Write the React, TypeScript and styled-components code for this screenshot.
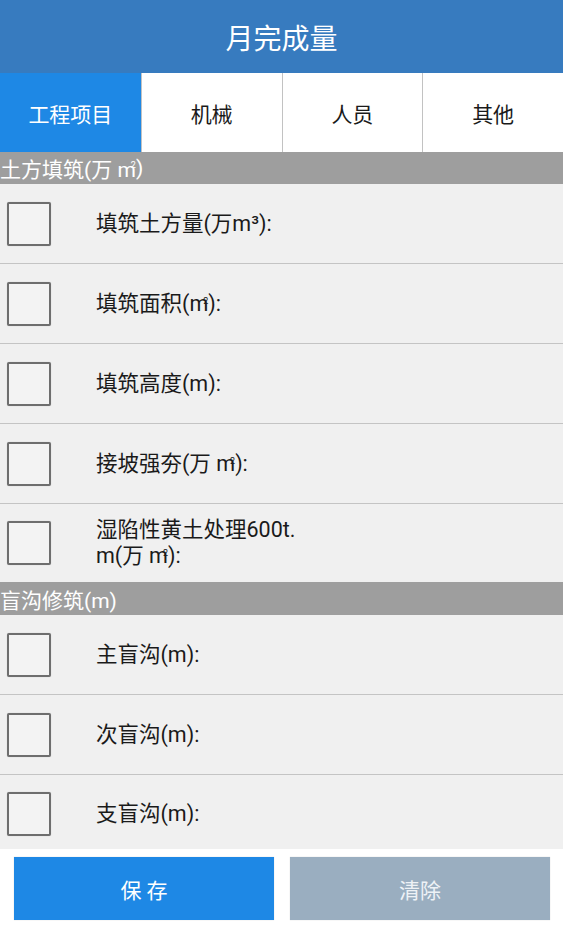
import React from "react";
import styled, { createGlobalStyle } from "styled-components";

const Global = createGlobalStyle`
  html, body { margin: 0; padding: 0; height: 100%; overflow: hidden; }
  body { font-family: Roboto, "Noto Sans CJK SC", sans-serif; background: #ffffff; }
  * { box-sizing: border-box; }
`;

const Screen = styled.div`
  width: 563px;
  height: 927px;
  display: flex;
  flex-direction: column;
  background: #ffffff;
`;

const TitleBar = styled.header`
  height: 73px;
  flex: 0 0 73px;
  background: #377bbf;
  color: #ffffff;
  display: flex;
  align-items: center;
  justify-content: center;
  font-size: 28px;
`;

const Tabs = styled.nav`
  height: 79px;
  flex: 0 0 79px;
  display: grid;
  grid-template-columns: repeat(4, 1fr);
  background: #ffffff;
`;

const Tab = styled.div<{ $active?: boolean; $first?: boolean }>`
  display: flex;
  align-items: center;
  justify-content: center;
  font-size: 21px;
  color: ${(p) => (p.$active ? "#ffffff" : "#1a1a1a")};
  background: ${(p) => (p.$active ? "#1e88e5" : "#ffffff")};
  border-left: ${(p) => (p.$first ? "none" : "1px solid #c2c2c2")};
`;

const Scroll = styled.main`
  flex: 1 1 auto;
  overflow: hidden;
  background: #f0f0f0;
`;

const SectionHeader = styled.div<{ $tall?: boolean }>`
  height: ${(p) => (p.$tall ? "33px" : "32px")};
  background: #9e9e9e;
  color: #ffffff;
  font-size: 21px;
  display: flex;
  align-items: center;
  white-space: nowrap;
`;

const Row = styled.div<{ $last?: boolean }>`
  height: ${(p) => (p.$last ? "78px" : "80px")};
  display: flex;
  align-items: center;
  background: #f0f0f0;
  border-bottom: ${(p) => (p.$last ? "none" : "1px solid #c4c4c4")};
`;

const Check = styled.span`
  flex: 0 0 44px;
  width: 44px;
  height: 44px;
  margin-left: 7px;
  border: 2px solid #6e6e6e;
  border-radius: 2px;
  background: #f3f3f3;
  box-shadow: 0 0 1px rgba(0, 0, 0, 0.25);
`;

const Label = styled.span`
  margin-left: 45px;
  width: 212px;
  font-size: 21.5px;
  line-height: 26px;
  color: #1a1a1a;
  word-break: break-all;
`;

const Sup = styled.sup`
  font-size: 9px;
  vertical-align: top;
  position: relative;
  top: -3px;
  margin-left: -5px;
`;

const Footer = styled.footer`
  flex: 0 0 78px;
  display: grid;
  grid-template-columns: 260px 260px;
  column-gap: 16px;
  padding: 8px 13px 7px 14px;
  background: #ffffff;
`;

const Button = styled.button<{ $variant: "primary" | "muted" }>`
  border: none;
  border-radius: 0;
  font-family: inherit;
  font-size: 21px;
  color: ${(p) => (p.$variant === "primary" ? "#ffffff" : "#eef2f6")};
  background: ${(p) => (p.$variant === "primary" ? "#1e88e5" : "#9aaec0")};
  box-shadow: 0 0 1px rgba(0, 0, 0, 0.2);
`;

const M2 = () => (
  <>
    m<Sup>2</Sup>
  </>
);

type Item = { key: string; label: React.ReactNode };

const earthwork: Item[] = [
  { key: "a", label: <>填筑土方量(万m³):</> },
  { key: "b", label: <>填筑面积(<M2 />):</> },
  { key: "c", label: <>填筑高度(m):</> },
  { key: "d", label: <>接坡强夯(万 <M2 />):</> },
  { key: "e", label: <>湿陷性黄土处理600t.m(万 <M2 />):</> },
];

const drains: Item[] = [
  { key: "f", label: <>主盲沟(m):</> },
  { key: "g", label: <>次盲沟(m):</> },
  { key: "h", label: <>支盲沟(m):</> },
];

const Section = ({
  title,
  items,
  tall,
}: {
  title: React.ReactNode;
  items: Item[];
  tall?: boolean;
}) => (
  <>
    <SectionHeader $tall={tall}>{title}</SectionHeader>
    {items.map((it, i) => (
      <Row key={it.key} $last={i === items.length - 1}>
        <Check />
        <Label>{it.label}</Label>
      </Row>
    ))}
  </>
);

export default function App() {
  return (
    <Screen>
      <Global />
      <TitleBar>月完成量</TitleBar>
      <Tabs>
        <Tab $active $first>工程项目</Tab>
        <Tab>机械</Tab>
        <Tab>人员</Tab>
        <Tab>其他</Tab>
      </Tabs>
      <Scroll>
        <Section title={<>土方填筑(万 <M2 />)</>} items={earthwork} />
        <Section title={<>盲沟修筑(m)</>} items={drains} tall />
      </Scroll>
      <Footer>
        <Button $variant="primary">保 存</Button>
        <Button $variant="muted">清除</Button>
      </Footer>
    </Screen>
  );
}
